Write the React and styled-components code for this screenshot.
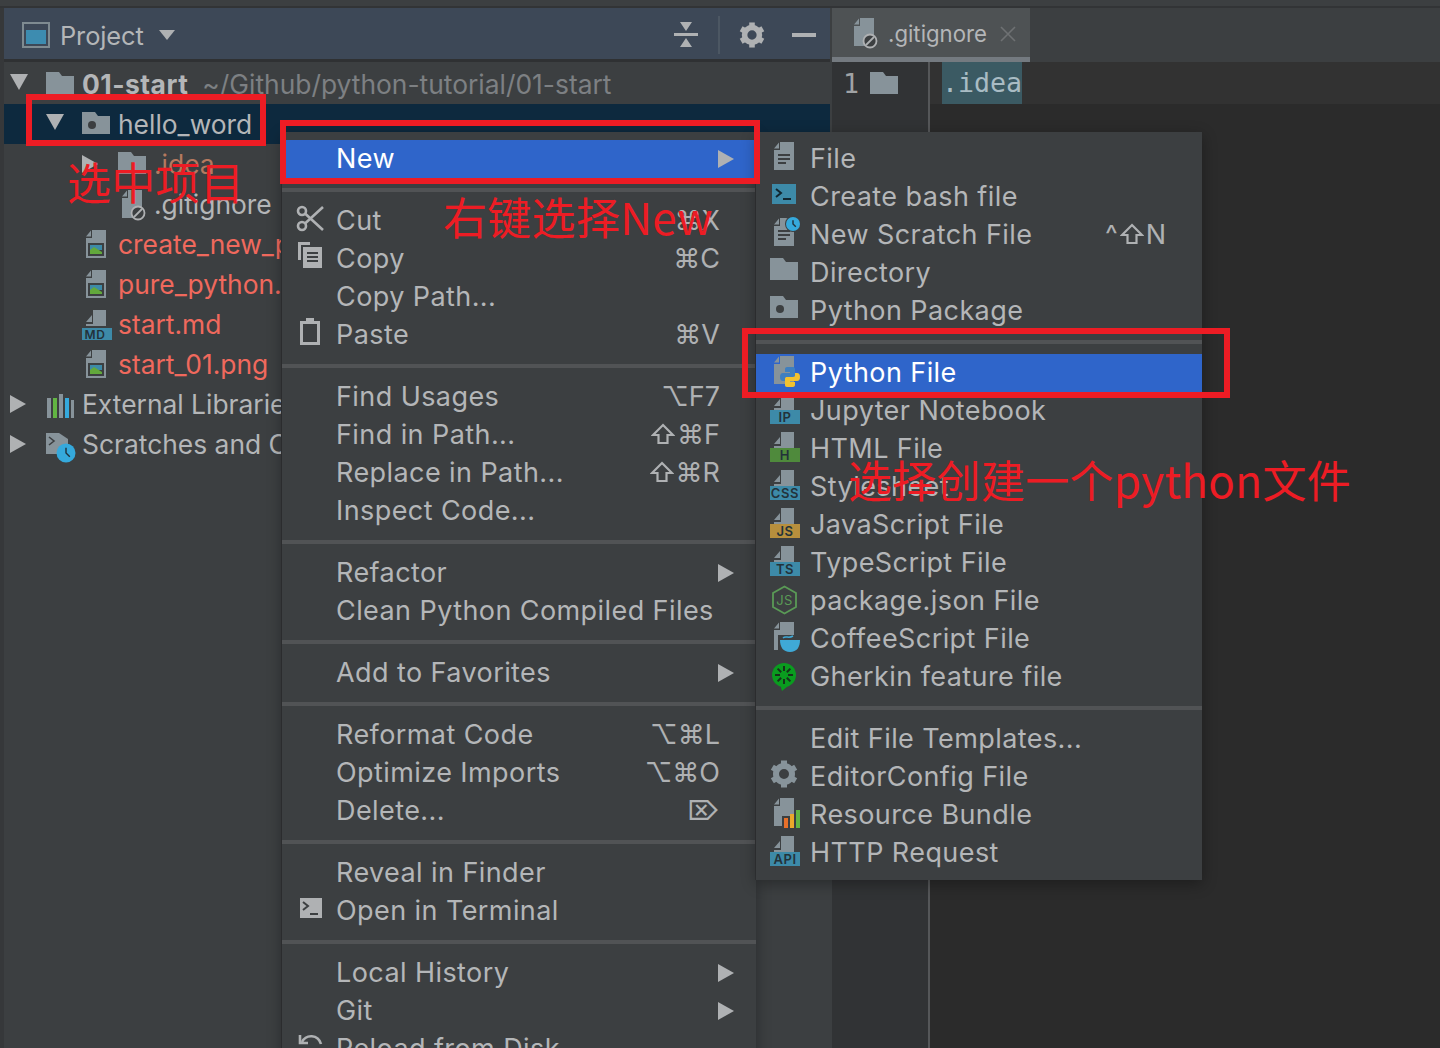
import React from 'react';
import styled, { createGlobalStyle } from 'styled-components';

const GREY = '#87939a';
const LIGHT = '#afb1b3';
const DARK = '#3c3f41';
const UI_FONT = '"Inter", "Liberation Sans", sans-serif';
const CJK_FONT = '"Noto Sans CJK SC", "Noto Sans", sans-serif';

const Global = createGlobalStyle`
  html, body { margin: 0; padding: 0; background: #3c3f41; }
  * { box-sizing: border-box; }
`;

const Page = styled.div`
  position: relative;
  width: 1440px;
  height: 1048px;
  overflow: hidden;
  background: ${DARK};
  font-family: ${UI_FONT};
  font-size: 27px;
  color: #b4b6b8;
  display: flex;
  flex-direction: column;
`;

const TopStrip = styled.div`
  height: 8px;
  flex: none;
  background: #3c3f41;
  border-bottom: 2px solid #323436;
`;

const Main = styled.div`
  flex: 1;
  display: flex;
  min-height: 0;
`;

const ProjectPanel = styled.section`
  width: 830px;
  flex: none;
  border-left: 4px solid #36383a;
  display: flex;
  flex-direction: column;
`;

const PanelHeader = styled.header`
  height: 54px;
  flex: none;
  background: #3d4857;
  border-bottom: 3px solid #2f3133;
  display: flex;
  align-items: center;
  padding: 3px 14px 0 18px;
`;

const PanelTitle = styled.span`
  margin-left: 10px;
  font-size: 25.4px;
  letter-spacing: -0.1px;
`;

const Caret = styled.span`
  width: 0;
  height: 0;
  margin-left: 15px;
  border-left: 8px solid transparent;
  border-right: 8px solid transparent;
  border-top: 10px solid ${LIGHT};
`;

const HeaderTools = styled.div`
  margin-left: auto;
  display: flex;
  align-items: center;
`;

const ToolDivider = styled.span`
  width: 2px;
  height: 38px;
  margin: 0 19px 0 20px;
  background: #4c5763;
`;

const Minus = styled.span`
  width: 24px;
  height: 4px;
  margin-left: 27px;
  background: ${LIGHT};
`;

const Tree = styled.div`
  padding-top: 2px;
  display: flex;
  flex-direction: column;
  font-size: 26.4px;
`;

const TreeRow = styled.div`
  height: 40px;
  display: flex;
  align-items: center;
  white-space: nowrap;
  padding-left: ${(p) => 6 + p.$depth * 36}px;
  background: ${(p) => (p.$selected ? '#0d293e' : 'transparent')};
`;

const Twisty = styled.span`
  width: 36px;
  flex: none;
  display: flex;
  align-items: center;
`;

const TriangleDown = styled.span`
  width: 0;
  height: 0;
  border-left: 9px solid transparent;
  border-right: 9px solid transparent;
  border-top: 16px solid ${LIGHT};
  margin-bottom: 4px;
`;

const TriangleRight = styled.span`
  width: 0;
  height: 0;
  border-top: 9px solid transparent;
  border-bottom: 9px solid transparent;
  border-left: 16px solid ${LIGHT};
`;

const TreeIcon = styled.span`
  width: 36px;
  height: 30px;
  flex: none;
  margin-top: 1px;
  display: block;
`;

const TreeLabel = styled.span`
  color: ${(p) => p.$color || '#b4b6b8'};
  font-weight: ${(p) => (p.$bold ? 700 : 400)};
  letter-spacing: ${(p) => (p.$bold ? '0.5px' : '0')};
`;

const TreeHint = styled.span`
  margin-left: 14px;
  color: #7d8083;
`;

const EditorPanel = styled.section`
  flex: 1;
  margin-left: 2px;
  display: flex;
  flex-direction: column;
`;

const TabBar = styled.div`
  height: 54px;
  flex: none;
  display: flex;
  background: ${DARK};
`;

const Tab = styled.div`
  width: 198px;
  display: flex;
  align-items: center;
  padding: 2px 14px 0 18px;
  background: #4e5254;
  border-bottom: 5px solid #747a80;
  font-size: 22.2px;
`;

const TabLabel = styled.span`
  margin-left: 8px;
  color: #b4b6b8;
`;

const TabIcon = styled.span`
  width: 30px;
  height: 30px;
  flex: none;
  margin-top: -2px;
`;

const TabClose = styled.svg`
  margin-left: auto;
  width: 16px;
  height: 16px;
`;

const EditorBody = styled.div`
  flex: 1;
  display: flex;
  background: #2b2b2b;
  font-family: "DejaVu Sans Mono", "Liberation Mono", monospace;
  font-size: 26.6px;
`;

const Gutter = styled.div`
  width: 98px;
  flex: none;
  background: #313335;
  border-right: 2px solid #555759;
`;

const GutterLine = styled.div`
  height: 42px;
  display: flex;
  align-items: center;
  padding-left: 11px;
  color: #a0a3a5;
`;

const GutterFolder = styled.span`
  width: 30px;
  height: 30px;
  margin-left: 11px;
  margin-top: 4px;
`;

const CodeArea = styled.div`
  flex: 1;
`;

const CodeLine = styled.div`
  height: 42px;
  display: flex;
  align-items: center;
  padding-left: 12px;
  background: #323232;
`;

const Match = styled.span`
  height: 42px;
  line-height: 42px;
  background: #3b5a63;
  color: #a9bcc4;
`;

const Menu = styled.div`
  position: absolute;
  top: 132px;
  left: ${(p) => p.$left}px;
  width: ${(p) => p.$width}px;
  padding: 8px 0;
  background: ${DARK};
  box-shadow: 0 4px 14px rgba(0, 0, 0, 0.32), -1px 0 0 #333537;
  z-index: ${(p) => p.$layer};
`;

const MenuRow = styled.div`
  height: 38px;
  display: flex;
  align-items: center;
  padding: 0 22px 0 14px;
  white-space: nowrap;
  letter-spacing: 0.42px;
  background: ${(p) => (p.$active ? '#2f65ca' : 'transparent')};
  color: ${(p) => (p.$active ? '#ffffff' : '#b4b6b8')};
`;

const MenuIcon = styled.span`
  width: 30px;
  height: 30px;
  flex: none;
  margin: 0 10px 4px 0;
`;

const MenuLabel = styled.span`
  margin-top: -2px;
`;

const Shortcut = styled.span`
  margin-left: auto;
  margin-right: 14px;
  margin-top: -2px;
  display: flex;
  align-items: center;
  gap: 2px;
  font-family: "Inter", "DejaVu Sans", sans-serif;
  font-size: 27px;
  letter-spacing: 0;
  color: #afb1b3;
`;

const ShiftGlyph = styled.svg`
  width: 24px;
  height: 22px;
  flex: none;
`;

const SubArrow = styled.span`
  margin-left: auto;
  width: 0;
  height: 0;
  border-top: 9px solid transparent;
  border-bottom: 9px solid transparent;
  border-left: 16px solid ${LIGHT};
`;

const MenuSeparator = styled.div`
  height: 24px;
  display: flex;
  align-items: center;
  &::before {
    content: '';
    width: 100%;
    height: 4px;
    background: #515355;
  }
`;

const RedBox = styled.div`
  position: absolute;
  left: ${(p) => p.$x}px;
  top: ${(p) => p.$y}px;
  width: ${(p) => p.$w}px;
  height: ${(p) => p.$h}px;
  border: 6px solid #ed1c24;
  z-index: 5;
`;

const Annotation = styled.div`
  position: absolute;
  left: ${(p) => p.$x}px;
  top: ${(p) => p.$y}px;
  font-family: ${CJK_FONT};
  font-size: 44px;
  line-height: 60px;
  letter-spacing: 0.3px;
  color: #ed1c24;
  white-space: nowrap;
  z-index: 6;
`;

const Svg = ({ children }) => (
  <svg width="30" height="32" viewBox="0 0 30 32" style={{ display: 'block', overflow: 'visible' }}>
    {children}
  </svg>
);

const FILE_PATH = 'M10 0H24V28H4V8H10Z M4 6.5L9 0.5V6.5Z';
const SHORT_FILE = 'M11 0H24V16H4V14H11Z M4 12L10 5V12Z';

const FileShape = () => <path d={FILE_PATH} fill={GREY} />;

const FileLines = () => (
  <path d="M8 13H20M8 17H20M8 21H16" stroke={DARK} strokeWidth="2" />
);

const Folder = ({ dot }) => (
  <>
    <path d="M0 2H13L16 6H28V24H0Z" fill={GREY} />
    {dot && <circle cx="10" cy="15" r="4" fill={DARK} />}
  </>
);

const Badge = ({ color, text, size = 13 }) => (
  <>
    <path d={SHORT_FILE} fill={GREY} />
    <rect x="0" y="16" width="30" height="14" fill={color} />
    <text x="15" y="28" textAnchor="middle" fontFamily="Inter, sans-serif" fontWeight="600" fontSize={size} letterSpacing="0.6" fill="#23323a">
      {text}
    </text>
  </>
);

const Clock = ({ cx, cy, r }) => (
  <>
    <circle cx={cx} cy={cy} r={r} fill="#35a9dc" />
    <path d={`M${cx} ${cy - r * 0.55}V${cy}L${cx + r * 0.4} ${cy + r * 0.4}`} stroke="#20303a" strokeWidth="1.4" fill="none" />
  </>
);

const GearShape = ({ color }) => (
  <>
    <circle cx="14" cy="14" r="8" fill="none" stroke={color} strokeWidth="6" />
    {[0, 60, 120, 180, 240, 300].map((deg) => (
      <rect key={deg} x="11" y="0.5" width="6" height="6" fill={color} transform={`rotate(${deg} 14 14)`} />
    ))}
  </>
);

const PYTHON_PATH = 'M7 0H13C14.5 0 15 1 15 2V8C15 9.5 14 10 13 10H7C5.5 10 5 11 5 12V14H3C1 14 0 12.5 0 10C0 7.5 1 6 3 6H10V5H5V2C5 0.8 6 0 7 0Z';

const icons = {
  folder: <Folder />,
  package: <Folder dot />,
  file: (
    <>
      <FileShape />
      <FileLines />
    </>
  ),
  bash: (
    <>
      <rect x="2" y="4" width="24" height="20" fill="#3d8aa8" />
      <path d="M6 9L11 13L6 17" fill="none" stroke="#12262f" strokeWidth="2" />
      <path d="M13 19H21" stroke="#12262f" strokeWidth="2" />
    </>
  ),
  scratch: (
    <>
      <FileShape />
      <FileLines />
      <circle cx="23" cy="6" r="8" fill={DARK} />
      <Clock cx={23} cy={6} r={7} />
    </>
  ),
  python: (
    <>
      <FileShape />
      <g transform="translate(10 11)">
        <path d={PYTHON_PATH} fill="#3f7fc0" />
        <path d={PYTHON_PATH} fill="#f2c230" transform="rotate(180 10 10)" />
      </g>
    </>
  ),
  jupyter: <Badge color="#3d8aa8" text="IP" />,
  html: <Badge color="#4f8a3c" text="H" />,
  css: <Badge color="#3d8aa8" text="CSS" />,
  js: <Badge color="#b78f3d" text="JS" />,
  ts: <Badge color="#3d8aa8" text="TS" />,
  api: <Badge color="#3d8aa8" text="API" />,
  node: (
    <>
      <path d="M14.5 2.5L26 9V23L14.5 29.5L3 23V9Z" fill="none" stroke="#5a9a56" strokeWidth="1.8" />
      <text x="14.5" y="21" textAnchor="middle" fontFamily="Inter, sans-serif" fontSize="13" fill="#5a9a56">JS</text>
    </>
  ),
  coffee: (
    <>
      <FileShape />
      <path d="M8 13H32V31H8Z" fill={DARK} />
      <path d="M10 18H30C30 25 27 30 20 30C13 30 10 25 10 18Z" fill="#3fa9d6" />
      <path d="M13 16C16 13 18 17 23 14" fill="none" stroke="#3fa9d6" strokeWidth="1.5" />
    </>
  ),
  gherkin: (
    <>
      <path d="M10 24L12 31L18 26Z" fill="#0a9c1f" />
      <circle cx="14" cy="15" r="12" fill="#0a9c1f" />
      {[0, 45, 90, 135, 180, 225, 270, 315].map((deg) => (
        <rect key={deg} x="13" y="6" width="2" height="5" fill="#16321a" transform={`rotate(${deg} 14 15)`} />
      ))}
    </>
  ),
  gear: <GearShape color={GREY} />,
  bundle: (
    <>
      <FileShape />
      <path d="M12 18H25V10H32V31H12Z" fill={DARK} />
      <rect x="14" y="20" width="4" height="10" fill="#e8702a" />
      <rect x="20" y="16" width="4" height="14" fill="#eaa92a" />
      <rect x="26" y="12" width="4" height="18" fill="#62b543" />
    </>
  ),
  gitignore: (
    <>
      <FileShape />
      <circle cx="20" cy="23" r="6.5" fill={DARK} stroke={LIGHT} strokeWidth="1.8" />
      <path d="M16 27L24 19" stroke={LIGHT} strokeWidth="1.8" />
    </>
  ),
  image: (
    <>
      <FileShape />
      <rect x="6" y="13" width="16" height="13" fill="#3c3f41" />
      <rect x="8" y="15" width="12" height="5" fill="#3d8aa8" />
      <path d="M8 24V20L12 17L20 22V24Z" fill="#62a83c" />
    </>
  ),
  md: (
    <>
      <path d={SHORT_FILE} fill={GREY} />
      <rect x="0" y="18" width="30" height="12" fill="#3d8aa8" />
      <text x="13" y="28.5" textAnchor="middle" fontFamily="Inter, sans-serif" fontWeight="600" fontSize="12" letterSpacing="0.6" fill="#23323a">MD</text>
    </>
  ),
  libraries: (
    <>
      <path d="M1 8H5V28H1ZM25 10H28V28H25Z" fill={GREY} />
      <rect x="7" y="8" width="4" height="20" fill="#62b543" />
      <rect x="13" y="4" width="4" height="24" fill={GREY} />
      <rect x="19" y="8" width="4" height="20" fill="#35a9dc" />
    </>
  ),
  scratches: (
    <>
      <path d="M0 3H13L22 9V24H0Z" fill={GREY} />
      <path d="M3 7L8 11L3 15" fill="none" stroke={DARK} strokeWidth="1.6" />
      <Clock cx={20} cy={23} r={9.5} />
    </>
  ),
  cut: (
    <g fill="none" stroke={LIGHT} strokeWidth="2.6">
      <circle cx="6" cy="7" r="4" />
      <circle cx="6" cy="22" r="4" />
      <path d="M9 9.5L27 26M9 19.5L27 3" />
    </g>
  ),
  copy: (
    <>
      <path d="M2 0H14V3H5V18H2Z" fill={LIGHT} />
      <rect x="7" y="5" width="19" height="21" fill={LIGHT} />
      <path d="M11 11H22M11 15H22M11 19H22" stroke={DARK} strokeWidth="2" />
    </>
  ),
  paste: (
    <>
      <rect x="5.5" y="4.5" width="17" height="21" fill="none" stroke={LIGHT} strokeWidth="3" />
      <rect x="10" y="0" width="8" height="6" fill={LIGHT} />
    </>
  ),
  terminal: (
    <>
      <rect x="4" y="4" width="22" height="20" fill={LIGHT} />
      <path d="M7 8L12 12L7 16" fill="none" stroke={DARK} strokeWidth="2" />
      <path d="M14 20H22" stroke={DARK} strokeWidth="2" />
    </>
  ),
  reload: (
    <g fill="none" stroke={LIGHT} strokeWidth="2.6">
      <path d="M6 10C10 2 22 2 25 12" />
      <path d="M4 3V11H12" />
    </g>
  ),
};

const Icon = ({ name }) => <Svg>{icons[name]}</Svg>;

const Shift = () => (
  <ShiftGlyph viewBox="0 0 24 22">
    <path d="M12 2L22 12H16.5V20H7.5V12H2Z" fill="none" stroke="#afb1b3" strokeWidth="2.2" />
  </ShiftGlyph>
);

const Keys = ({ keys }) => (
  <Shortcut>
    {keys.split('⇧').map((part, i) => (
      <React.Fragment key={i}>
        {i > 0 && <Shift />}
        {part && <span>{part}</span>}
      </React.Fragment>
    ))}
  </Shortcut>
);

const mainMenu = [
  [{ label: 'New', arrow: true, active: true }],
  [
    { label: 'Cut', icon: 'cut', keys: '⌘X' },
    { label: 'Copy', icon: 'copy', keys: '⌘C' },
    { label: 'Copy Path...' },
    { label: 'Paste', icon: 'paste', keys: '⌘V' },
  ],
  [
    { label: 'Find Usages', keys: '⌥F7' },
    { label: 'Find in Path...', keys: '⇧⌘F' },
    { label: 'Replace in Path...', keys: '⇧⌘R' },
    { label: 'Inspect Code...' },
  ],
  [{ label: 'Refactor', arrow: true }, { label: 'Clean Python Compiled Files' }],
  [{ label: 'Add to Favorites', arrow: true }],
  [
    { label: 'Reformat Code', keys: '⌥⌘L' },
    { label: 'Optimize Imports', keys: '⌥⌘O' },
    { label: 'Delete...', keys: '⌦' },
  ],
  [{ label: 'Reveal in Finder' }, { label: 'Open in Terminal', icon: 'terminal' }],
  [
    { label: 'Local History', arrow: true },
    { label: 'Git', arrow: true },
    { label: 'Reload from Disk', icon: 'reload' },
  ],
];

const newMenu = [
  [
    { label: 'File', icon: 'file' },
    { label: 'Create bash file', icon: 'bash' },
    { label: 'New Scratch File', icon: 'scratch', keys: '^⇧N' },
    { label: 'Directory', icon: 'folder' },
    { label: 'Python Package', icon: 'package' },
  ],
  [
    { label: 'Python File', icon: 'python', active: true },
    { label: 'Jupyter Notebook', icon: 'jupyter' },
    { label: 'HTML File', icon: 'html' },
    { label: 'Stylesheet', icon: 'css' },
    { label: 'JavaScript File', icon: 'js' },
    { label: 'TypeScript File', icon: 'ts' },
    { label: 'package.json File', icon: 'node' },
    { label: 'CoffeeScript File', icon: 'coffee' },
    { label: 'Gherkin feature file', icon: 'gherkin' },
  ],
  [
    { label: 'Edit File Templates...' },
    { label: 'EditorConfig File', icon: 'gear' },
    { label: 'Resource Bundle', icon: 'bundle' },
    { label: 'HTTP Request', icon: 'api' },
  ],
];

const treeRows = [
  { depth: 0, open: true, icon: 'folder', label: '01-start', bold: true, hint: '~/Github/python-tutorial/01-start' },
  { depth: 1, open: true, icon: 'package', label: 'hello_word', selected: true },
  { depth: 2, closed: true, icon: 'folder', label: '.idea', color: '#b5795f' },
  { depth: 2, icon: 'gitignore', label: '.gitignore' },
  { depth: 1, icon: 'image', label: 'create_new_project.png', color: '#f0695d' },
  { depth: 1, icon: 'image', label: 'pure_python.png', color: '#f0695d' },
  { depth: 1, icon: 'md', label: 'start.md', color: '#f0695d' },
  { depth: 1, icon: 'image', label: 'start_01.png', color: '#f0695d' },
  { depth: 0, closed: true, icon: 'libraries', label: 'External Libraries' },
  { depth: 0, closed: true, icon: 'scratches', label: 'Scratches and Consoles' },
];

const ContextMenu = ({ groups, left, width, layer }) => (
  <Menu $left={left} $width={width} $layer={layer}>
    {groups.map((group, i) => (
      <React.Fragment key={i}>
        {i > 0 && <MenuSeparator />}
        {group.map((item) => (
          <MenuRow key={item.label} $active={item.active}>
            <MenuIcon>{item.icon && <Icon name={item.icon} />}</MenuIcon>
            <MenuLabel>{item.label}</MenuLabel>
            {item.keys && <Keys keys={item.keys} />}
            {item.arrow && <SubArrow />}
          </MenuRow>
        ))}
      </React.Fragment>
    ))}
  </Menu>
);

const App = () => (
  <Page>
    <Global />
    <TopStrip />
    <Main>
      <ProjectPanel>
        <PanelHeader>
          <svg width="28" height="26" viewBox="0 0 28 26">
            <rect x="1" y="1" width="26" height="24" fill="none" stroke="#7f8b91" strokeWidth="2" />
            <rect x="4" y="8" width="20" height="14" fill="#3d8cb0" />
          </svg>
          <PanelTitle>Project</PanelTitle>
          <Caret />
          <HeaderTools>
            <svg width="24" height="26" viewBox="0 0 24 26">
              <path d="M6 0H18L12 9ZM6 25H18L12 16Z" fill={LIGHT} />
              <rect x="0" y="11" width="24" height="3" fill={LIGHT} />
            </svg>
            <ToolDivider />
            <svg width="26" height="26" viewBox="0 0 28 28">
              <GearShape color={LIGHT} />
            </svg>
            <Minus />
          </HeaderTools>
        </PanelHeader>
        <Tree>
          {treeRows.map((row) => (
            <TreeRow key={row.label} $depth={row.depth} $selected={row.selected}>
              <Twisty>
                {row.open && <TriangleDown />}
                {row.closed && <TriangleRight />}
              </Twisty>
              <TreeIcon>
                <Icon name={row.icon} />
              </TreeIcon>
              <TreeLabel $color={row.color} $bold={row.bold}>{row.label}</TreeLabel>
              {row.hint && <TreeHint>{row.hint}</TreeHint>}
            </TreeRow>
          ))}
        </Tree>
      </ProjectPanel>
      <EditorPanel>
        <TabBar>
          <Tab>
            <TabIcon>
              <Icon name="gitignore" />
            </TabIcon>
            <TabLabel>.gitignore</TabLabel>
            <TabClose viewBox="0 0 16 16">
              <path d="M1 1L15 15M15 1L1 15" stroke="#6e7173" strokeWidth="1.6" />
            </TabClose>
          </Tab>
        </TabBar>
        <EditorBody>
          <Gutter>
            <GutterLine>
              1
              <GutterFolder>
                <Icon name="folder" />
              </GutterFolder>
            </GutterLine>
          </Gutter>
          <CodeArea>
            <CodeLine>
              <Match>.idea</Match>
            </CodeLine>
          </CodeArea>
        </EditorBody>
      </EditorPanel>
    </Main>

    <ContextMenu groups={mainMenu} left={282} width={474} layer={2} />
    <ContextMenu groups={newMenu} left={756} width={446} layer={3} />

    <RedBox $x={26} $y={94} $w={240} $h={52} />
    <RedBox $x={280} $y={120} $w={480} $h={64} />
    <RedBox $x={742} $y={328} $w={488} $h={70} />
    <Annotation $x={67} $y={151}>选中项目</Annotation>
    <Annotation $x={443} $y={186}>右键选择New</Annotation>
    <Annotation $x={848} $y={449}>选择创建一个python文件</Annotation>
  </Page>
);

export default App;
